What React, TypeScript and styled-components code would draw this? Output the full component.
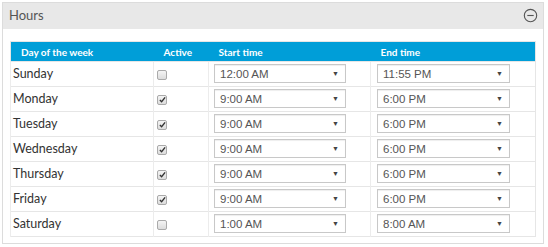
import styled, { createGlobalStyle } from "styled-components";

const GlobalStyle = createGlobalStyle`
  body {
    margin: 0;
    background: #fff;
    font-family: Lato, "Open Sans", sans-serif;
  }
`;

type Day = {
  name: string;
  active: boolean;
  start: string;
  end: string;
};

const days: Day[] = [
  { name: "Sunday", active: false, start: "12:00 AM", end: "11:55 PM" },
  { name: "Monday", active: true, start: "9:00 AM", end: "6:00 PM" },
  { name: "Tuesday", active: true, start: "9:00 AM", end: "6:00 PM" },
  { name: "Wednesday", active: true, start: "9:00 AM", end: "6:00 PM" },
  { name: "Thursday", active: true, start: "9:00 AM", end: "6:00 PM" },
  { name: "Friday", active: true, start: "9:00 AM", end: "6:00 PM" },
  { name: "Saturday", active: false, start: "1:00 AM", end: "8:00 AM" },
];

const Panel = styled.section`
  margin: 2px 4px 0 2px;
  border: 1px solid #dcdcdc;
  background: #fff;
`;

const PanelHeader = styled.header`
  display: flex;
  align-items: center;
  justify-content: space-between;
  height: 26px;
  padding: 0 5px 2px 6px;
  box-sizing: border-box;
  background: #e8e8e8;
  color: #555;
  font-size: 13px;
`;

const PanelBody = styled.div`
  padding: 12px 7px 6px 7px;
`;

const Table = styled.table`
  width: 100%;
  border-collapse: collapse;
  border: 1px solid #e6e6e6;
`;

const HeadCell = styled.th<{ $w?: number }>`
  width: ${(p) => (p.$w ? `${p.$w}px` : "auto")};
  height: 20px;
  padding: 0 0 0 10px;
  background: #009ed8;
  color: #fff;
  font-size: 10px;
  font-weight: 700;
  text-align: left;
  box-sizing: border-box;
`;

const Cell = styled.td<{ $pad?: number }>`
  height: 25px;
  padding: 0 0 1px ${(p) => p.$pad ?? 2}px;
  border-top: 1px solid #e6e6e6;
  border-left: 1px solid #ececec;
  color: #333;
  font-size: 12.5px;
  box-sizing: border-box;
`;

const Check = styled.span`
  display: inline-flex;
  align-items: center;
  justify-content: center;
  width: 8px;
  height: 8px;
  border: 1px solid #aaa;
  border-radius: 2px;
  background: linear-gradient(#f4f4f4, #dcdcdc);
  vertical-align: middle;
`;

const Select = styled.div<{ $w: number }>`
  display: flex;
  align-items: center;
  justify-content: space-between;
  width: ${(p) => p.$w}px;
  height: 19px;
  padding: 0 6px 0 5px;
  box-sizing: border-box;
  border: 1px solid #c8c8c8;
  box-shadow: inset 0 1px 1px #eee;
  background: #fff;
  color: #555;
  font-family: "Liberation Sans", Arial, sans-serif;
  font-size: 11.5px;
`;

const Caret = styled.span`
  font-size: 7px;
  color: #444;
`;

function MinusCircle() {
  return (
    <svg width="15" height="15" viewBox="0 0 16 16" fill="none">
      <circle cx="8" cy="8" r="6.6" stroke="#555" strokeWidth="1.2" />
      <line x1="4.6" y1="8" x2="11.4" y2="8" stroke="#555" strokeWidth="1.2" />
    </svg>
  );
}

function CheckMark() {
  return (
    <svg width="7" height="7" viewBox="0 0 8 8">
      <path d="M1 4.5 L3 6.5 L7 1.5" stroke="#333" strokeWidth="1.6" fill="none" />
    </svg>
  );
}

export default function App() {
  return (
    <>
      <GlobalStyle />
      <Panel>
        <PanelHeader>
          <span>Hours</span>
          <MinusCircle />
        </PanelHeader>
        <PanelBody>
          <Table>
            <thead>
              <tr>
                <HeadCell $w={143}>Day of the week</HeadCell>
                <HeadCell $w={55}>Active</HeadCell>
                <HeadCell $w={162}>Start time</HeadCell>
                <HeadCell>End time</HeadCell>
              </tr>
            </thead>
            <tbody>
              {days.map((d) => (
                <tr key={d.name}>
                  <Cell>{d.name}</Cell>
                  <Cell $pad={3}>
                    <Check>{d.active && <CheckMark />}</Check>
                  </Cell>
                  <Cell $pad={5}>
                    <Select $w={132}>
                      {d.start}
                      <Caret>▼</Caret>
                    </Select>
                  </Cell>
                  <Cell $pad={6}>
                    <Select $w={133}>
                      {d.end}
                      <Caret>▼</Caret>
                    </Select>
                  </Cell>
                </tr>
              ))}
            </tbody>
          </Table>
        </PanelBody>
      </Panel>
    </>
  );
}
